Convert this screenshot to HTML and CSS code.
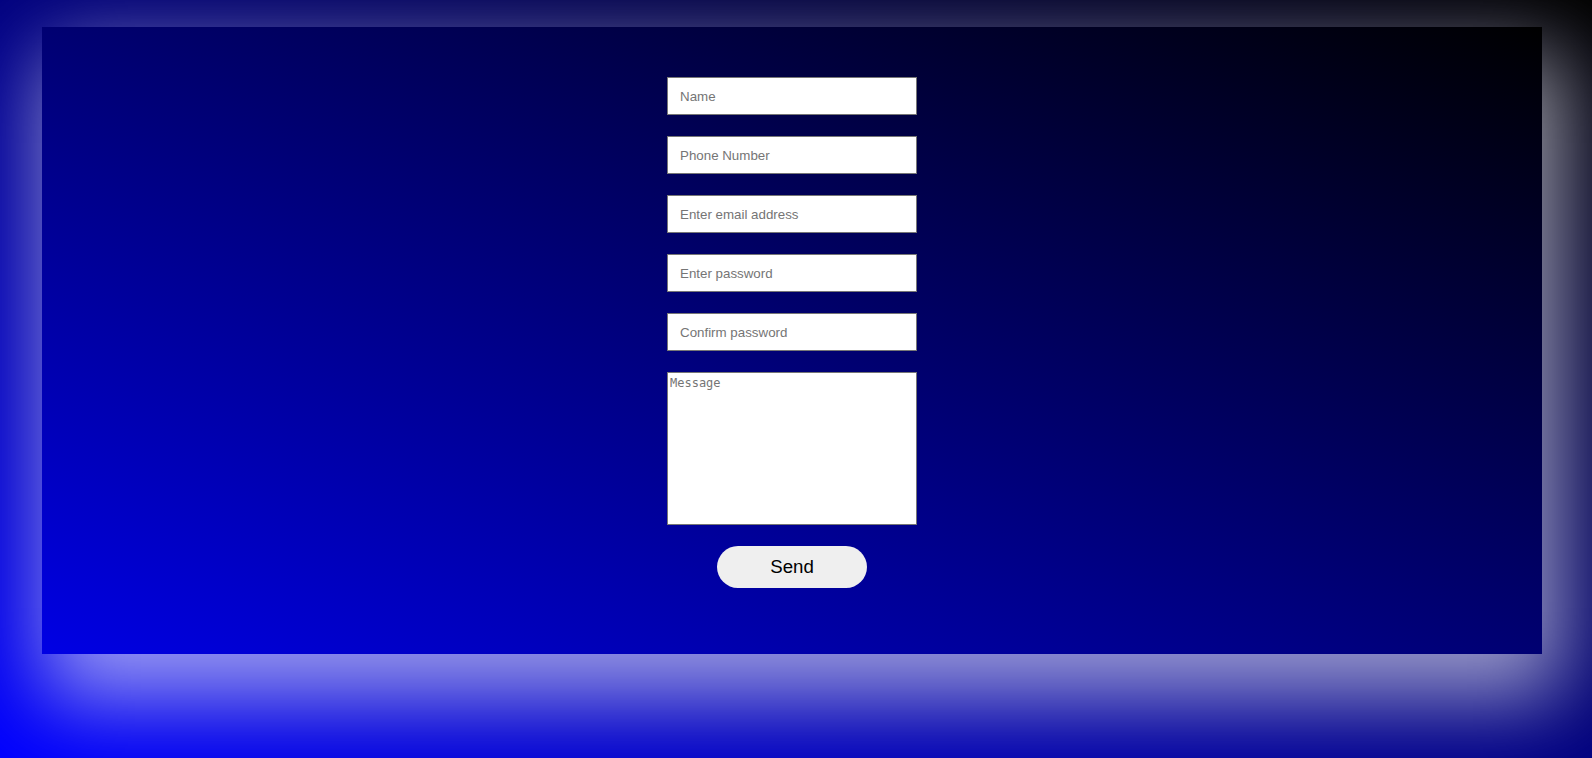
FILE: index.html
```html
<!DOCTYPE html>
<html lang="en">
<head>
<meta charset="utf-8">
<title>Contact</title>
<link rel="stylesheet" href="styles.css">
</head>
<body>
<div class="panel">
  <form class="form">
    <input class="field" type="text" placeholder="Name">
    <input class="field" type="text" placeholder="Phone Number">
    <input class="field" type="email" placeholder="Enter email address">
    <input class="field" type="password" placeholder="Enter password">
    <input class="field" type="password" placeholder="Confirm password">
    <textarea class="message" placeholder="Message"></textarea>
    <button class="send" type="button">Send</button>
  </form>
</div>
</body>
</html>
```

FILE: styles.css
```css
html {
  height: 100%;
}
body {
  margin: 0;
  min-height: 100%;
  background: linear-gradient(to top right, #0000ff, #000000);
  overflow: hidden;
}
.panel {
  margin: 27px 50px 0 42px;
  height: 627px;
  box-sizing: border-box;
  padding-top: 50px;
  background: linear-gradient(to top right, #0000e4, #000000);
  box-shadow: 12px 35px 80px 10px rgba(255, 255, 255, 0.6);
}
.form {
  display: flex;
  flex-direction: column;
  align-items: center;
  gap: 21px;
}
.field {
  width: 250px;
  height: 38px;
  box-sizing: border-box;
  margin: 0;
  padding: 0 12px;
  border: 1px solid #767676;
  background: #ffffff;
  font-family: "Liberation Sans", Arial, sans-serif;
  font-size: 13.33px;
  color: #000;
  outline: none;
}
.field::placeholder,
.message::placeholder {
  color: #757575;
}
.message {
  width: 250px;
  height: 153px;
  box-sizing: border-box;
  margin: 0;
  padding: 3px 2px 2px;
  border: 1px solid #767676;
  background: #ffffff;
  font-family: "DejaVu Sans Mono", "Liberation Mono", monospace;
  font-size: 12px;
  resize: none;
  outline: none;
}
.send {
  width: 150px;
  height: 42px;
  margin: 0;
  border: none;
  border-radius: 21px;
  background: #efefef;
  color: #000;
  font-family: "Liberation Sans", Arial, sans-serif;
  font-size: 18.67px;
  padding: 0;
}
```
